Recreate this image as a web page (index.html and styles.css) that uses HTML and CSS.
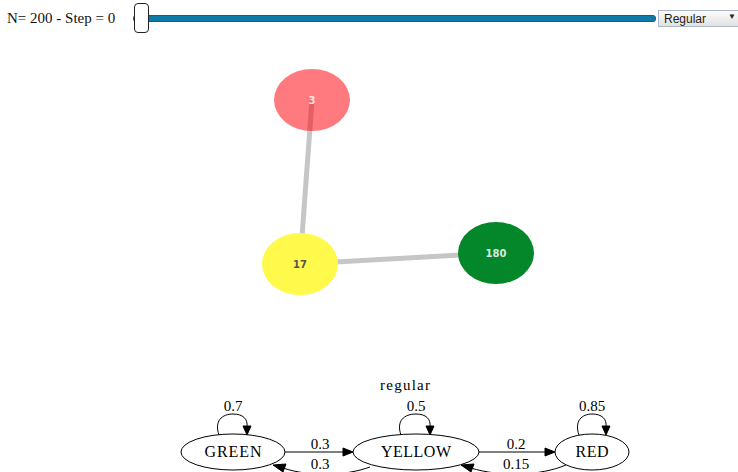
FILE: index.html
```html
<!DOCTYPE html>
<html lang="en">
<head>
  <meta charset="UTF-8">
  <title>Markov Chain Simulation</title>
  <link rel="stylesheet" href="styles.css">
</head>
<body>
  <div class="controls">
    <span class="status">N= 200 - Step = 0</span>
    <input class="stepper" type="range" min="0" max="200" value="0">
    <div class="select-wrap">
      <select class="mode">
        <option>Regular</option>
        <option>Absorbing</option>
      </select>
    </div>
  </div>

  <svg class="force" viewBox="0 36 738 334" width="738" height="334">
    <line class="link" x1="312" y1="100" x2="300" y2="264"/>
    <line class="link" x1="300" y1="264" x2="496" y2="253"/>
    <ellipse class="node red" cx="312" cy="100" rx="38" ry="31"/>
    <ellipse class="node yellow" cx="300" cy="264" rx="38" ry="31"/>
    <ellipse class="node green" cx="496" cy="253" rx="38" ry="31"/>
    <text class="count light" x="312" y="104">3</text>
    <text class="count dark" x="300" y="268">17</text>
    <text class="count pale" x="496" y="257">180</text>
  </svg>

  <svg class="chain" viewBox="0 370 738 102" width="738" height="102">
    <text class="title" x="405" y="390" textLength="50">regular</text>

    <!-- GREEN -->
    <ellipse class="state" cx="233" cy="452" rx="52" ry="18"/>
    <text class="name" x="233" y="457" textLength="57">GREEN</text>
    <path class="edge" d="M219,435 C214,421 222,414 233,414 C243,414 248,419 247,427"/>
    <polygon class="head" points="243,426 251,426 247,435"/>
    <text class="prob" x="233" y="411">0.7</text>

    <!-- YELLOW -->
    <ellipse class="state" cx="416" cy="452" rx="63" ry="18"/>
    <text class="name" x="416" y="457" textLength="70">YELLOW</text>
    <path class="edge" d="M401,435 C396,421 404,414 416,414 C426,414 431,419 430,427"/>
    <polygon class="head" points="426,426 434,426 430,435"/>
    <text class="prob" x="416" y="411">0.5</text>

    <!-- RED -->
    <ellipse class="state" cx="592" cy="452" rx="37" ry="18"/>
    <text class="name" x="592" y="457" textLength="33">RED</text>
    <path class="edge" d="M579,435 C574,421 582,414 592,414 C602,414 607,419 606,427"/>
    <polygon class="head" points="602,426 610,426 606,435"/>
    <text class="prob" x="592" y="411">0.85</text>

    <!-- GREEN -> YELLOW -->
    <line class="edge" x1="285" y1="452" x2="344" y2="452"/>
    <polygon class="head" points="343,448 353,452 343,456"/>
    <text class="prob" x="320" y="449">0.3</text>

    <!-- YELLOW -> GREEN -->
    <path class="edge" d="M370,467 C345,476 310,477 283,468"/>
    <polygon class="head" points="286,464 283,472 273,465"/>
    <text class="prob" x="320" y="469">0.3</text>

    <!-- YELLOW -> RED -->
    <line class="edge" x1="479" y1="452" x2="546" y2="452"/>
    <polygon class="head" points="545,448 555,452 545,456"/>
    <text class="prob" x="516" y="449">0.2</text>

    <!-- RED -> YELLOW -->
    <path class="edge" d="M566,465 C540,476 500,477 471,468"/>
    <polygon class="head" points="474,464 471,472 461,465"/>
    <text class="prob" x="516" y="469">0.15</text>
  </svg>
</body>
</html>
```

FILE: styles.css
```css
body {
  margin: 0;
  padding: 0;
  background-color: #ffffff;
  width: 738px;
  height: 472px;
  overflow: hidden;
}

.controls {
  display: flex;
  align-items: center;
  height: 36px;
  padding-left: 7px;
}

.status {
  flex: none;
  font-family: "Liberation Serif", "Times New Roman", serif;
  font-size: 15px;
  color: #111;
  width: 126px;
}

.stepper {
  -webkit-appearance: none;
  appearance: none;
  flex: none;
  width: 523px;
  height: 32px;
  margin: 0;
  background: transparent;
}

.stepper::-webkit-slider-runnable-track {
  height: 7px;
  background-color: #0e7aa8;
  border: 1px solid #1d5b78;
  border-radius: 3px;
}

.stepper::-webkit-slider-thumb {
  -webkit-appearance: none;
  width: 15px;
  height: 30px;
  margin-top: -13px;
  background-color: #ffffff;
  border: 1.5px solid #222;
  border-radius: 4px;
}

.select-wrap {
  position: relative;
  flex: none;
  margin-left: 2px;
}

.select-wrap::after {
  content: "\25BC";
  position: absolute;
  right: 4px;
  top: 3px;
  font-size: 8px;
  color: #222;
  pointer-events: none;
}

.mode {
  -webkit-appearance: none;
  appearance: none;
  width: 82px;
  height: 17px;
  padding: 0 0 0 5px;
  font-family: "Liberation Sans", Arial, sans-serif;
  font-size: 12px;
  color: #222;
  background: linear-gradient(#fbfbfb, #e2e2e2);
  border: 1px solid #a9b7c9;
  border-radius: 0;
}

svg {
  display: block;
}

.link {
  stroke: #c6c6c6;
  stroke-width: 5;
}

.node.red {
  fill: #ff0008;
  fill-opacity: 0.52;
}

.node.yellow {
  fill: #fff94c;
}

.node.green {
  fill: #04862a;
}

.count {
  font-family: "DejaVu Sans", Verdana, sans-serif;
  font-size: 10px;
  font-weight: bold;
  text-anchor: middle;
}

.count.light {
  fill: #ffffff;
  fill-opacity: 0.8;
}

.count.dark {
  fill: #555555;
}

.count.pale {
  fill: #d9e8dc;
}

.chain text {
  font-family: "Liberation Serif", "Times New Roman", serif;
  text-anchor: middle;
  fill: #000;
}

.title {
  font-size: 15px;
}

.name {
  font-size: 16px;
}

.prob {
  font-size: 15px;
}

.state {
  fill: none;
  stroke: #000;
  stroke-width: 1;
}

.edge {
  fill: none;
  stroke: #000;
  stroke-width: 1;
}

.head {
  fill: #000;
  stroke: #000;
}
```
